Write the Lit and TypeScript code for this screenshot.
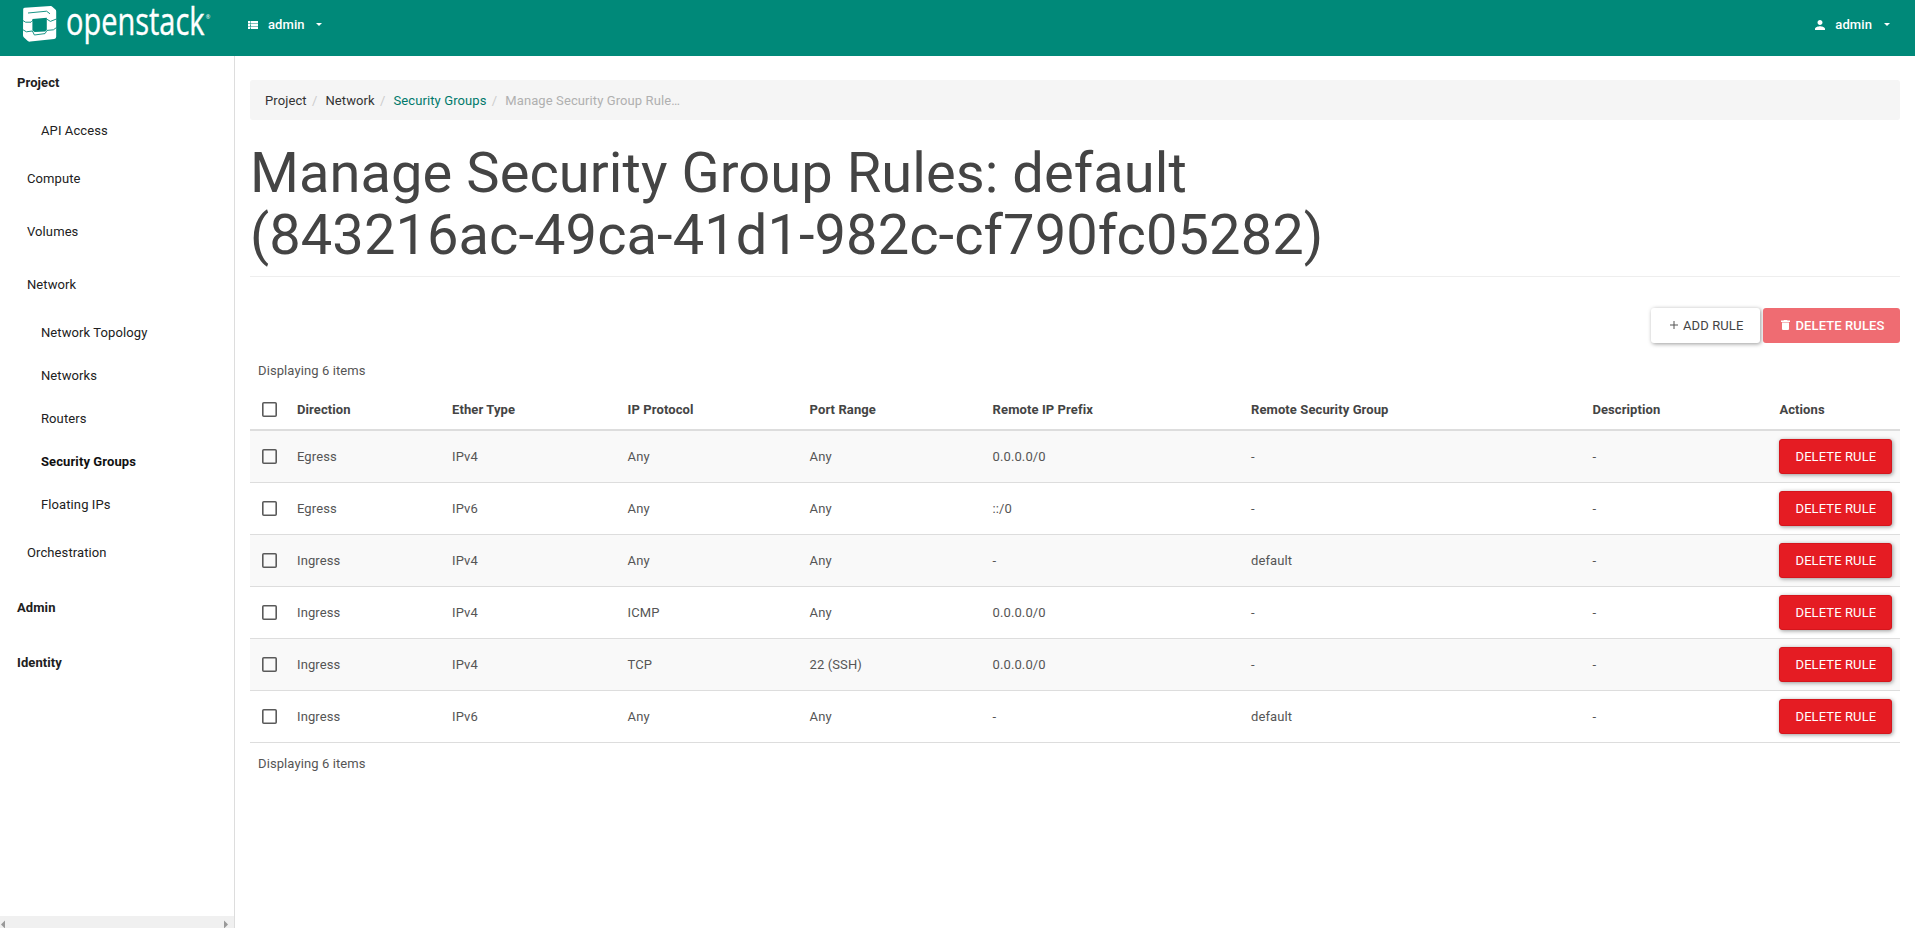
import { LitElement, html, css, svg } from "lit";
import { customElement } from "lit/decorators.js";

interface Rule {
  direction: string;
  ether: string;
  protocol: string;
  port: string;
  prefix: string;
  group: string;
  description: string;
}

const rule = (
  direction: string, ether: string, protocol: string, port: string,
  prefix: string, group: string, description = "-",
): Rule => ({ direction, ether, protocol, port, prefix, group, description });

const RULES: Rule[] = [
  rule("Egress", "IPv4", "Any", "Any", "0.0.0.0/0", "-"),
  rule("Egress", "IPv6", "Any", "Any", "::/0", "-"),
  rule("Ingress", "IPv4", "Any", "Any", "-", "default"),
  rule("Ingress", "IPv4", "ICMP", "Any", "0.0.0.0/0", "-"),
  rule("Ingress", "IPv4", "TCP", "22 (SSH)", "0.0.0.0/0", "-"),
  rule("Ingress", "IPv6", "Any", "Any", "-", "default"),
];

const HEADINGS = [
  "Direction", "Ether Type", "IP Protocol", "Port Range",
  "Remote IP Prefix", "Remote Security Group", "Description", "Actions",
];

@customElement("os-topbar")
export class OsTopbar extends LitElement {
  static styles = css`
    :host {
      display: flex;
      align-items: flex-start;
      height: 56px;
      background: #008979;
      color: #fff;
      font-weight: 500;
    }
    .brand { display: block; width: 234px; height: 56px; }
    .wordmark {
      font-family: "Open Sans", sans-serif;
      font-size: 37.5px;
      font-weight: 400;
      letter-spacing: 0;
      stroke: #fff;
      stroke-width: 0.4px;
    }
    .reg { font-family: "Open Sans", sans-serif; font-size: 5.5px; letter-spacing: 0; }
    .menu { display: flex; align-items: center; box-sizing: border-box; height: 48px; padding-top: 1px; }
    .left { padding-left: 14px; }
    .right { margin-left: auto; padding-right: 25px; }
    .list { width: 10px; height: 8px; margin-right: 10px; }
    .user { width: 10px; height: 10px; margin-right: 10px; }
    .caret { width: 6px; height: 3px; margin-left: 12px; }
    .left .caret { margin-left: 11px; }
  `;

  render() {
    return html`
      <svg class="brand" viewBox="0 0 234 56" fill="#fff">
        <path d="M23.2 9 Q23.2 7.9 24.6 7.7 L50.6 6.1 Q51.6 6 52.6 6.9 L55.4 9.6 Q56.2 10.3 56.2 11.4 V36.8 Q56.2 38.7 54.2 38.9 L30.4 41.6 Q28.8 41.8 27.8 40.9 L24 37.4 Q23 36.4 23 35.2 Z"/>
        <path fill="#008979" d="M32.4 19 L46.8 17.8 V29.8 L45.2 31.4 L34.6 32 L32.4 30.2 Z"/>
        <g fill="none" stroke="#008979" stroke-width="0.9">
          <path d="M28 13 L46.6 11.2 L50 13.8 M23 20.6 L25.6 22.2 H31 L33.8 19.4 M46.6 19 L50.4 21.4 L56.4 19 M23 29.8 L26.4 31.8 L32.4 31 L34.4 35 L45 33.6 L47 30.4 L53.4 29.8 L56.4 27.6"/>
        </g>
        <text class="wordmark" x="66" y="35" textLength="138.5" lengthAdjust="spacingAndGlyphs">openstack</text>
        <text class="reg" x="205.8" y="18.5">®</text>
      </svg>
      <div class="menu left">
        <svg class="list" viewBox="0 0 10 8" fill="#fff">
          <path d="M0 0h2.3v2.3H0zM2.8 0H10v2.3H2.8zM0 2.8h2.3v2.3H0zM2.8 2.8H10v2.3H2.8zM0 5.6h2.3v2.3H0zM2.8 5.6H10v2.3H2.8z"/>
        </svg>
        <span>admin</span>
        <svg class="caret" viewBox="0 0 6 3" fill="#fff"><path d="M0 0h6L3 3z"/></svg>
      </div>
      <div class="menu right">
        <svg class="user" viewBox="4 4 16 16" fill="#fff">
          <path d="M12 12c2.21 0 4-1.79 4-4s-1.79-4-4-4-4 1.79-4 4 1.79 4 4 4zm0 2c-2.67 0-8 1.34-8 4v2h16v-2c0-2.66-5.33-4-8-4z"/>
        </svg>
        <span>admin</span>
        <svg class="caret" viewBox="0 0 6 3" fill="#fff"><path d="M0 0h6L3 3z"/></svg>
      </div>
    `;
  }
}

@customElement("os-sidebar")
export class OsSidebar extends LitElement {
  static styles = css`
    :host {
      display: flex;
      flex-direction: column;
      box-sizing: border-box;
      width: 235px;
      height: 872px;
      border-right: 1px solid #ddd;
      color: #212121;
    }
    nav { flex: 1; }
    .row { display: flex; align-items: center; }
    .dash { height: 55px; padding-left: 17px; font-weight: 700; }
    .dash.open { height: 53px; }
    .dash.after { margin-top: 1px; }
    .panel-group { height: 53px; padding-left: 27px; }
    .item { height: 43px; padding-left: 41px; }
    .item.active { font-weight: 700; color: #111; }
    .scroll {
      display: flex;
      justify-content: space-between;
      height: 12px;
      padding: 0 6px 0 1px;
      background: #f0f0f0;
    }
    .scroll svg { width: 4px; height: 12px; }
  `;

  render() {
    return html`
      <nav>
        <div class="row dash open">Project</div>
        <div class="row item">API Access</div>
        <div class="row panel-group">Compute</div>
        <div class="row panel-group">Volumes</div>
        <div class="row panel-group">Network</div>
        <div class="row item">Network Topology</div>
        <div class="row item">Networks</div>
        <div class="row item">Routers</div>
        <div class="row item active">Security Groups</div>
        <div class="row item">Floating IPs</div>
        <div class="row panel-group">Orchestration</div>
        <div class="row dash after">Admin</div>
        <div class="row dash">Identity</div>
      </nav>
      <div class="scroll">
        <svg viewBox="0 0 4 12" fill="#999"><path d="M4 4.5v8L0 8.5z"/></svg>
        <svg viewBox="0 0 4 12" fill="#999"><path d="M0 4.5v8L4 8.5z"/></svg>
      </div>
    `;
  }
}

@customElement("os-rules-table")
export class OsRulesTable extends LitElement {
  static styles = css`
    :host { display: block; color: #555; }
    .count { display: flex; align-items: center; height: 41px; padding-left: 8px; }
    .row {
      display: grid;
      grid-template-columns: 39px 155px 175.6px 182px 183px 258.4px 341.4px 187px 128.6px;
      align-items: center;
      height: 51px;
      border-bottom: 1px solid #ddd;
    }
    .row > * { padding-left: 8px; }
    .row:nth-child(even) { background: #f9f9f9; }
    .head { height: 37px; padding-bottom: 1px; border-bottom-width: 2px; color: #444; font-weight: 700; }
    .row > .check { display: flex; padding-left: 12px; }
    .check svg { width: 15px; height: 15px; }
    .btn {
      box-sizing: border-box;
      display: flex;
      align-items: center;
      justify-content: center;
      width: 113px;
      height: 35px;
      border: 1px solid #d5151c;
      border-radius: 3px;
      background: #e51c23;
      color: #fff;
      box-shadow: 1px 1px 4px rgba(0, 0, 0, 0.4);
    }
  `;

  private checkbox() {
    return html`<div class="check">
      <svg viewBox="0 0 15 15">${svg`<rect x=".8" y=".8" width="13.4" height="13.4" rx="1" fill="none" stroke="#5a5a5a" stroke-width="1.6"/>`}</svg>
    </div>`;
  }

  render() {
    return html`
      <div class="count">Displaying ${RULES.length} items</div>
      <div>
        <div class="row head">
          ${this.checkbox()}
          ${HEADINGS.map((h) => html`<span>${h}</span>`)}
        </div>
        ${RULES.map((r) => html`
          <div class="row">
            ${this.checkbox()}
            <span>${r.direction}</span>
            <span>${r.ether}</span>
            <span>${r.protocol}</span>
            <span>${r.port}</span>
            <span>${r.prefix}</span>
            <span>${r.group}</span>
            <span>${r.description}</span>
            <div><div class="btn">DELETE RULE</div></div>
          </div>`)}
      </div>
      <div class="count">Displaying ${RULES.length} items</div>
    `;
  }
}

@customElement("app-root")
export class AppRoot extends LitElement {
  static styles = css`
    :host {
      display: block;
      height: 935px;
      overflow: hidden;
      background: #fff;
      font: 13px/25px Roboto, sans-serif;
      letter-spacing: 0.1px;
      color: #444;
    }
    .body { display: flex; }
    main { flex: 1; padding: 24px 15px 0; }
    .crumbs {
      display: flex;
      align-items: center;
      box-sizing: border-box;
      height: 40px;
      padding: 1px 0 0 15px;
      border-radius: 3px;
      background: #f5f5f5;
      color: #333;
    }
    .sep { padding: 0 8px 0 5.3px; color: #ccc; }
    .link { color: #00796b; }
    .current { color: #b0b0b0; }
    h1 {
      margin: 23.4px 0 0;
      padding-bottom: 9.4px;
      border-bottom: 1px solid #eee;
      font-size: 56px;
      line-height: 61.6px;
      font-weight: 400;
      letter-spacing: 0.08px;
      color: #444;
    }
    .title { display: block; }
    .actions { display: flex; justify-content: flex-end; gap: 3px; padding-top: 31px; margin-bottom: 7px; }
    .btn {
      box-sizing: border-box;
      display: flex;
      align-items: center;
      height: 35px;
      border-radius: 3px;
    }
    .add { width: 109px; padding-left: 19px; color: #444; box-shadow: 1px 1px 4px rgba(0, 0, 0, 0.4); }
    .delete { width: 137px; padding-left: 18px; background: #ef6c72; color: #fff; font-weight: 500; }
    .plus { width: 8px; height: 8px; margin-right: 5px; }
    .trash { width: 9px; height: 10px; margin-right: 5.5px; }
  `;

  render() {
    return html`
      <os-topbar></os-topbar>
      <div class="body">
        <os-sidebar></os-sidebar>
        <main>
          <div class="crumbs">
            <span>Project</span><span class="sep">/</span>
            <span>Network</span><span class="sep">/</span>
            <span class="link">Security Groups</span><span class="sep">/</span>
            <span class="current">Manage Security Group Rule…</span>
          </div>
          <h1>
            <span class="title">Manage Security Group Rules: default</span>
            <span class="title">(843216ac-49ca-41d1-982c-cf790fc05282)</span>
          </h1>
          <div class="actions">
            <div class="btn add">
              <svg class="plus" viewBox="0 0 8 8" fill="none" stroke="#555"><path d="M4 0v8M0 4h8"/></svg>
              ADD RULE
            </div>
            <div class="btn delete">
              <svg class="trash" viewBox="0 0 9 10" fill="#fff"><path d="M3 0h3l.6.6H9V2H0V.6h2.4zM1 2.6h7V9q0 1-1 1H2Q1 10 1 9z"/></svg>
              DELETE RULES
            </div>
          </div>
          <os-rules-table></os-rules-table>
        </main>
      </div>
    `;
  }
}
